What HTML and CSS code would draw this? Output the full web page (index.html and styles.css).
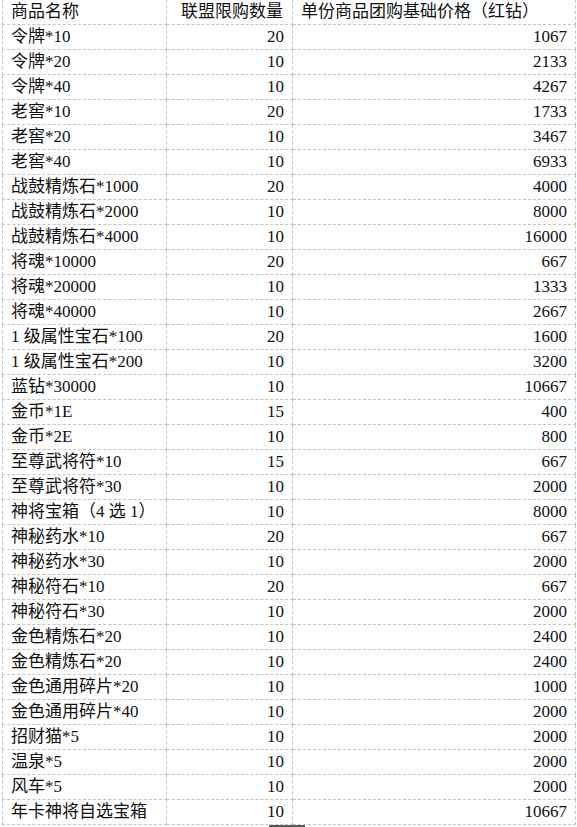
FILE: index.html
```html
<!DOCTYPE html>
<html lang="zh-CN">
<head>
<meta charset="utf-8">
<title>联盟团购</title>
<link rel="stylesheet" href="styles.css">
</head>
<body>
<table class="sheet">
  <colgroup>
    <col class="c-name">
    <col class="c-qty">
    <col class="c-price">
  </colgroup>
  <tr class="head"><td>商品名称</td><td class="qty-head">联盟限购数量</td><td>单份商品团购基础价格（红钻）</td></tr>
  <tr><td>令牌*10</td><td class="num">20</td><td class="num">1067</td></tr>
  <tr><td>令牌*20</td><td class="num">10</td><td class="num">2133</td></tr>
  <tr><td>令牌*40</td><td class="num">10</td><td class="num">4267</td></tr>
  <tr><td>老窖*10</td><td class="num">20</td><td class="num">1733</td></tr>
  <tr><td>老窖*20</td><td class="num">10</td><td class="num">3467</td></tr>
  <tr><td>老窖*40</td><td class="num">10</td><td class="num">6933</td></tr>
  <tr><td>战鼓精炼石*1000</td><td class="num">20</td><td class="num">4000</td></tr>
  <tr><td>战鼓精炼石*2000</td><td class="num">10</td><td class="num">8000</td></tr>
  <tr><td>战鼓精炼石*4000</td><td class="num">10</td><td class="num">16000</td></tr>
  <tr><td>将魂*10000</td><td class="num">20</td><td class="num">667</td></tr>
  <tr><td>将魂*20000</td><td class="num">10</td><td class="num">1333</td></tr>
  <tr><td>将魂*40000</td><td class="num">10</td><td class="num">2667</td></tr>
  <tr><td>1 级属性宝石*100</td><td class="num">20</td><td class="num">1600</td></tr>
  <tr><td>1 级属性宝石*200</td><td class="num">10</td><td class="num">3200</td></tr>
  <tr><td>蓝钻*30000</td><td class="num">10</td><td class="num">10667</td></tr>
  <tr><td>金币*1E</td><td class="num">15</td><td class="num">400</td></tr>
  <tr><td>金币*2E</td><td class="num">10</td><td class="num">800</td></tr>
  <tr><td>至尊武将符*10</td><td class="num">15</td><td class="num">667</td></tr>
  <tr><td>至尊武将符*30</td><td class="num">10</td><td class="num">2000</td></tr>
  <tr><td>神将宝箱（4 选 1）</td><td class="num">10</td><td class="num">8000</td></tr>
  <tr><td>神秘药水*10</td><td class="num">20</td><td class="num">667</td></tr>
  <tr><td>神秘药水*30</td><td class="num">10</td><td class="num">2000</td></tr>
  <tr><td>神秘符石*10</td><td class="num">20</td><td class="num">667</td></tr>
  <tr><td>神秘符石*30</td><td class="num">10</td><td class="num">2000</td></tr>
  <tr><td>金色精炼石*20</td><td class="num">10</td><td class="num">2400</td></tr>
  <tr><td>金色精炼石*20</td><td class="num">10</td><td class="num">2400</td></tr>
  <tr><td>金色通用碎片*20</td><td class="num">10</td><td class="num">1000</td></tr>
  <tr><td>金色通用碎片*40</td><td class="num">10</td><td class="num">2000</td></tr>
  <tr><td>招财猫*5</td><td class="num">10</td><td class="num">2000</td></tr>
  <tr><td>温泉*5</td><td class="num">10</td><td class="num">2000</td></tr>
  <tr><td>风车*5</td><td class="num">10</td><td class="num">2000</td></tr>
  <tr><td>年卡神将自选宝箱</td><td class="num">10</td><td class="num">10667</td></tr>
</table>
<div class="scroll-mark"></div>
</body>
</html>
```
FILE: styles.css
```css
html, body {
  margin: 0;
  padding: 0;
  background: #ffffff;
}

body {
  position: relative;
  width: 577px;
  height: 827px;
  overflow: hidden;
  font-family: "Liberation Serif", "Noto Sans CJK SC", serif;
  font-size: 17px;
  color: #111111;
}

.sheet {
  margin-left: 2px;
  border-collapse: collapse;
  table-layout: fixed;
  width: 573px;
}

.c-name { width: 164px; }
.c-qty { width: 126px; }
.c-price { width: 283px; }

.sheet td {
  height: 24px;
  padding: 0 8px 0 8px;
  line-height: 24px;
  white-space: nowrap;
  overflow: hidden;
  border: 1px dashed #c4c4c4;
  vertical-align: middle;
}

.sheet tr.head td {
  border-top: none;
}

.sheet td.num {
  text-align: right;
  padding-right: 8px;
}

.sheet td.qty-head {
  text-align: right;
  padding-right: 9px;
}

.scroll-mark {
  position: absolute;
  left: 269px;
  top: 825px;
  width: 36px;
  height: 2px;
  background: #5a5a5a;
}
```
